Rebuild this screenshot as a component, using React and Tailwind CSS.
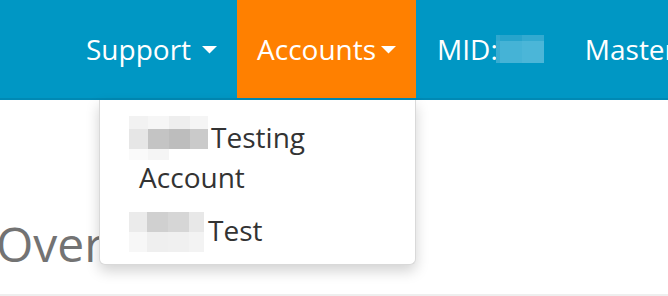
import React from 'react';

function Caret({ className }) {
  return (
    <svg width="15" height="8" viewBox="0 0 15 8" className={className}>
      <path d="M0 0 L15 0 L7.5 7.5 Z" fill="white" />
    </svg>
  );
}

// pixelated blur block, rows of cells
function Mosaic({ cols, rows, cells, className }) {
  return (
    <div className={'flex flex-col ' + (className || '')}>
      {rows.map((h, r) => (
        <div key={r} className="flex" style={{ height: h }}>
          {cols.map((w, c) => (
            <div key={c} className={cells[r][c]} style={{ width: w }} />
          ))}
        </div>
      ))}
    </div>
  );
}

export default function App() {
  return (
    <div className="w-[668px] h-[296px] overflow-hidden bg-white font-['Open_Sans',sans-serif]">
      <nav className="relative z-10 h-[100px] bg-[#0097c4] border-b-2 border-[#0089b4] flex pl-[66px] whitespace-nowrap text-white text-[28px] leading-[40px]">
        <div className="h-[98px] flex items-center pl-5 pr-[20px]">
          <span>Support</span>
          <Caret className="ml-[11px] mt-[1px]" />
        </div>
        <div className="relative h-[98px] flex items-center pl-5 pr-[20px] bg-[#ff8000]">
          <span>Accounts</span>
          <Caret className="ml-[5px] mt-[1px]" />
          <div className="absolute top-[100px] right-0 w-[317px] bg-white border border-t-0 border-[#d9d9d9] rounded-b-[6px] shadow-[0_6px_14px_rgba(0,0,0,0.18)] pt-[16px] pb-[12px] pl-[29px] text-[#333333] flex flex-col gap-[10px]">
            <div>
              <div className="flex items-end">
                <Mosaic
                  className="mb-[-3px] mr-[3px]"
                  cols={[19, 21, 21, 18]}
                  rows={[13, 20, 11]}
                  cells={[
                    ['bg-[#f2f2f2]', 'bg-[#f6f6f6]', 'bg-[#eeeeee]', 'bg-[#f5f5f5]'],
                    ['bg-[#e6e6e6]', 'bg-[#c4c4c4]', 'bg-[#bdbdbd]', 'bg-[#cacaca]'],
                    ['bg-[#fafafa]', 'bg-[#f5f5f5]', 'bg-white', 'bg-white'],
                  ]}
                />
                <span>Testing</span>
              </div>
              <div className="pl-[10px]">Account</div>
            </div>
            <div className="flex items-center">
              <Mosaic
                className="mr-[4px] mt-[5px]"
                cols={[18, 21, 21, 15]}
                rows={[20, 20]}
                cells={[
                  ['bg-[#ebebeb]', 'bg-[#d0d0d0]', 'bg-[#d6d6d6]', 'bg-[#e8e8e8]'],
                  ['bg-[#f7f7f7]', 'bg-[#efefef]', 'bg-[#f0f0f0]', 'bg-[#f3f3f3]'],
                ]}
              />
              <span>Test</span>
            </div>
          </div>
        </div>
        <div className="h-[98px] flex items-center pl-[21px] pr-[21px]">
          <span>MID:</span>
          <Mosaic
            className="-ml-[2px]"
            cols={[4, 22, 22]}
            rows={[6, 22]}
            cells={[
              ['bg-[#2fa8cf]', 'bg-[#27a4cc]', 'bg-[#33aad0]'],
              ['bg-[#38acd2]', 'bg-[#45b3d6]', 'bg-[#4bb6d8]'],
            ]}
          />
        </div>
        <div className="h-[98px] flex items-center px-5">
          <span>Master</span>
        </div>
      </nav>
      <main className="pt-[118px]">
        <h1 className="-ml-[4px] text-[48px] leading-[52.8px] text-[#737373] font-normal">Overview</h1>
        <div className="mt-[23px] border-t-2 border-[#eeeeee]" />
      </main>
    </div>
  );
}
